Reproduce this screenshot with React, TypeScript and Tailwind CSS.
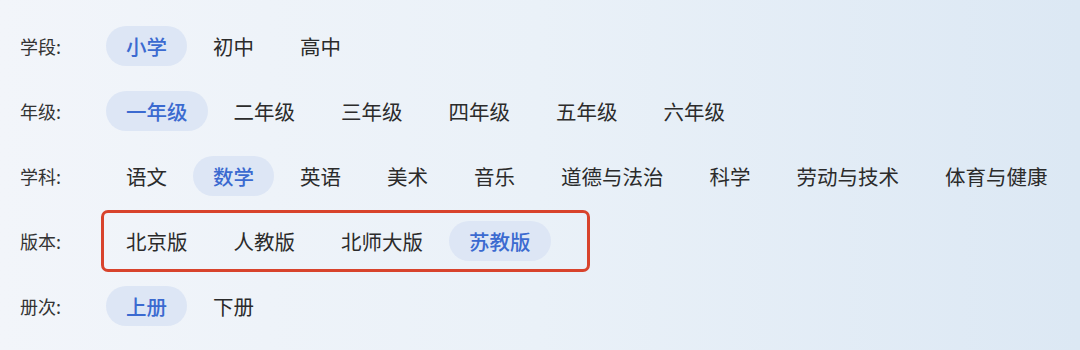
import React from "react";

type Row = {
  label: string;
  items: string[];
  active: number;
  boxed?: boolean;
};

const rows: Row[] = [
  { label: "学段:", items: ["小学", "初中", "高中"], active: 0 },
  {
    label: "年级:",
    items: ["一年级", "二年级", "三年级", "四年级", "五年级", "六年级"],
    active: 0,
  },
  {
    label: "学科:",
    items: ["语文", "数学", "英语", "美术", "音乐", "道德与法治", "科学", "劳动与技术", "体育与健康"],
    active: 1,
  },
  { label: "版本:", items: ["北京版", "人教版", "北师大版", "苏教版"], active: 3, boxed: true },
  { label: "册次:", items: ["上册", "下册"], active: 0 },
];

export default function App() {
  return (
    <div
      className="h-[350px] w-[1080px] overflow-hidden bg-gradient-to-r from-[#f2f5fa] via-[#eaf1f8] to-[#dce8f4] pt-[26px]"
      style={{ fontFamily: '"Noto Sans CJK SC", "Noto Sans", sans-serif' }}
    >
      <div className="flex flex-col gap-[25px]">
        {rows.map((row) => (
          <FilterRow key={row.label} row={row} />
        ))}
      </div>
    </div>
  );
}

function FilterRow({ row }: { row: Row }) {
  return (
    <div className="flex h-[40px] items-center">
      <span className="w-[106px] pl-[20px] text-[18px] text-[#333333]">{row.label}</span>
      <div
        className={
          row.boxed
            ? "-my-[13px] -ml-[5px] flex items-center gap-[6px] rounded-[7px] border-[3px] border-[#d8432c] py-[8px] pl-[2px] pr-[36px]"
            : "flex items-center gap-[6px]"
        }
      >
        {row.items.map((item, i) => (
          <span
            key={item}
            className={
              i === row.active
                ? "flex h-[40px] items-center rounded-full bg-[#dde6f5] px-[20px] text-[20.5px] font-medium text-[#3b6ad0]"
                : "flex h-[40px] items-center rounded-full px-[20px] text-[20.5px] text-[#2b2b2b]"
            }
          >
            {item}
          </span>
        ))}
      </div>
    </div>
  );
}
